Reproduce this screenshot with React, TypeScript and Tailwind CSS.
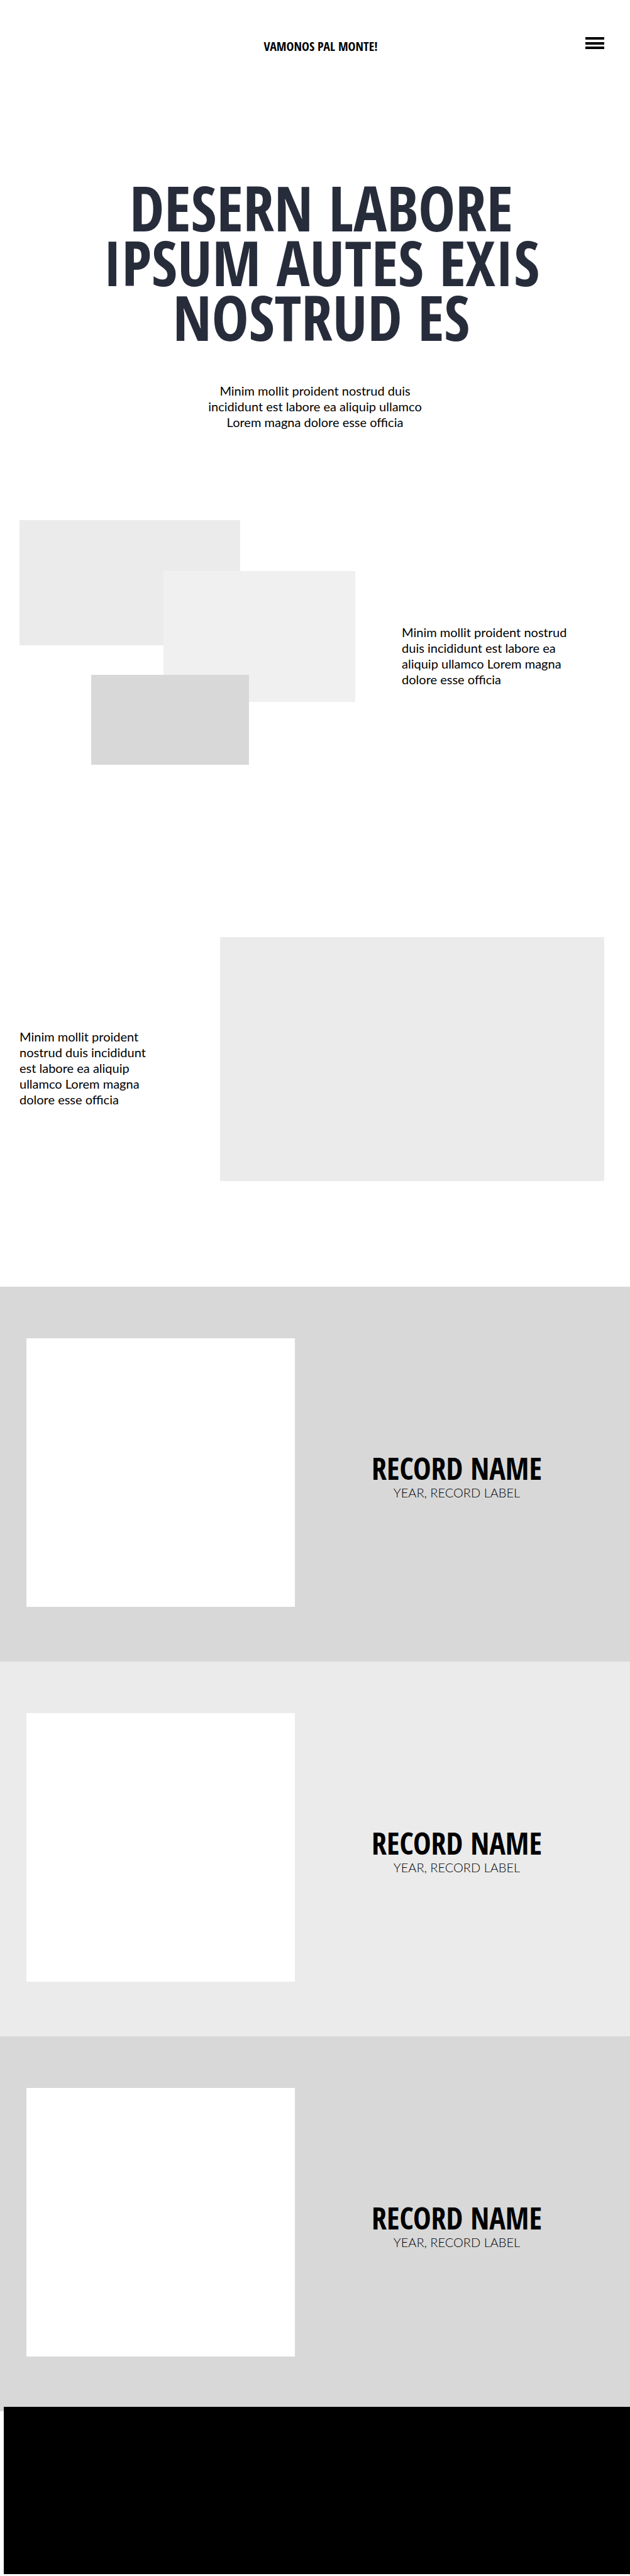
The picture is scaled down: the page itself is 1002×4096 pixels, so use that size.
type RecordItem = { id: number; name: string; label: string; tone: string };

const records: RecordItem[] = [
  { id: 1, name: "RECORD NAME", label: "YEAR, RECORD LABEL", tone: "bg-[#d8d8d8]" },
  { id: 2, name: "RECORD NAME", label: "YEAR, RECORD LABEL", tone: "bg-[#ebebeb]" },
  { id: 3, name: "RECORD NAME", label: "YEAR, RECORD LABEL", tone: "bg-[#d8d8d8]" },
];

const display = "font-['Open_Sans_Condensed','Roboto_Condensed',sans-serif] font-bold";

function Header() {
  return (
    <header className="grid h-[104px] grid-cols-[1fr_auto_1fr] items-start pt-[59px] pr-[41px] pl-[59px]">
      <a href="#top" className={`${display} col-start-2 text-[20px] leading-[29px] text-black`}>
        VAMONOS PAL MONTE!
      </a>
      <button type="button" aria-label="Open menu" className="justify-self-end">
        <svg viewBox="0 0 30 19" className="block h-[19px] w-[30px]" fill="#000" aria-hidden="true">
          <rect width="30" height="4" />
          <rect y="8" width="30" height="4" />
          <rect y="15" width="30" height="4" />
        </svg>
      </button>
    </header>
  );
}

function Hero() {
  return (
    <section className="text-center">
      <h1 className={`${display} pt-[182px] pl-5 text-[99px] leading-[87px] text-[#272c3b]`}>
        DESERN LABORE
        <br />
        IPSUM AUTES EXIS
        <br />
        NOSTRUD ES
      </h1>
      <p className="mx-auto mt-[62px] max-w-[360px] text-[20px] leading-[25px]">
        Minim mollit proident nostrud duis
        <br />
        incididunt est labore ea aliquip ullamco
        <br />
        Lorem magna dolore esse officia
      </p>
    </section>
  );
}

function Collage() {
  return (
    <div className="grid aspect-[543/396] w-[55%] shrink-0 grid-cols-[116fr_117fr_124fr_14fr_172fr] grid-rows-[83fr_120fr_48fr_44fr_102fr]">
      <div className="col-start-1 col-end-4 row-start-1 row-end-3 bg-[#ebebeb]" />
      <div className="col-start-3 col-end-6 row-start-2 row-end-5 bg-[#f0f0f0]" />
      <div className="col-start-2 col-end-5 row-start-4 row-end-6 bg-[#d8d8d8]" />
    </div>
  );
}

export default function App() {
  return (
    <div id="top" className="bg-white pb-[2px] font-['Lato',sans-serif] text-black">
      <Header />
      <main>
        <Hero />
        <section className="mt-[143px] flex items-center gap-[74px] pl-[31px]">
          <Collage />
          <p className="w-[290px] pt-[42px] text-[20px] leading-[25px]">
            Minim mollit proident nostrud
            <br />
            duis incididunt est labore ea
            <br />
            aliquip ullamco Lorem magna
            <br />
            dolore esse officia
          </p>
        </section>
        <section className="mt-[274px] flex items-center pr-[41px] pl-[31px]">
          <p className="min-w-0 flex-1 pt-[29px] text-[20px] leading-[25px]">
            Minim mollit proident
            <br />
            nostrud duis incididunt
            <br />
            est labore ea aliquip
            <br />
            ullamco Lorem magna
            <br />
            dolore esse officia
          </p>
          <div className="aspect-[611/388] w-[611px] bg-[#ebebeb]" />
        </section>
        <div className="mt-[168px]">
          {records.map((r) => (
            <article key={r.id} className={`${r.tone} flex pt-[82px] pr-[18px] pb-[87px] pl-[42px]`}>
              <div className="aspect-square w-[427px] bg-white" />
              <div className="flex flex-1 flex-col items-center justify-center pt-[10px] text-center">
                <h2 className={`${display} text-[48px] leading-[53px]`}>{r.name}</h2>
                <p className="text-[20px] leading-[25px] font-light">{r.label}</p>
              </div>
            </article>
          ))}
        </div>
      </main>
      <footer className="-mt-[7px] ml-[6px] h-[266px] bg-black" />
    </div>
  );
}
